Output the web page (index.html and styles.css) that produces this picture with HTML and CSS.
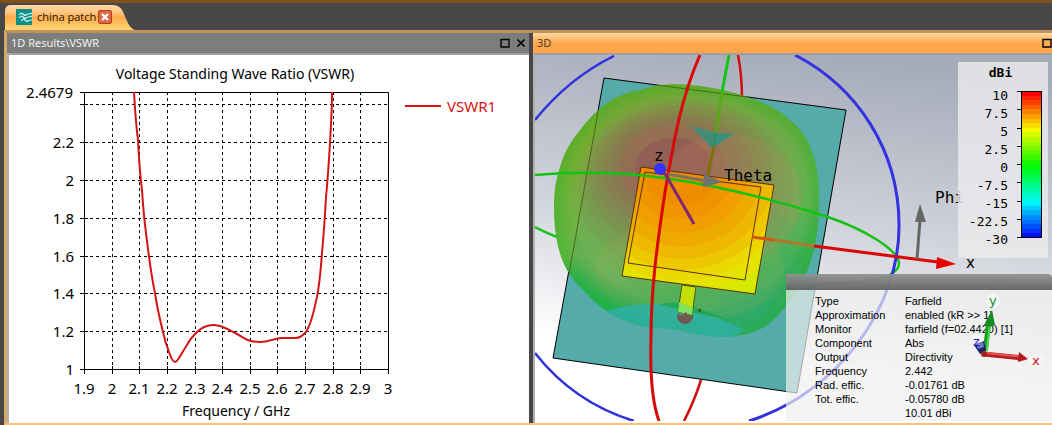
FILE: index.html
```html
<!DOCTYPE html>
<html lang="en">
<head>
    <meta charset="UTF-8">
    <meta name="viewport" content="width=device-width, initial-scale=1.0">
    <title>china patch</title>
    <link rel="stylesheet" href="styles.css">
</head>
<body>
    <div class="tabs">
        <div class="tab">
            <svg class="tab-shape" viewBox="0 0 130 26" preserveAspectRatio="none" aria-hidden="true">
                <defs>
                    <linearGradient id="tabFill" x1="0" y1="0" x2="0" y2="1">
                        <stop offset="0" stop-color="#ffd9a0"/>
                        <stop offset="0.3" stop-color="#ffc680"/>
                        <stop offset="0.5" stop-color="#ffac4e"/>
                        <stop offset="1" stop-color="#ffd873"/>
                    </linearGradient>
                </defs>
                <path d="M0 26V6Q0 0 6 0H108Q115 0 118 7L123 19Q126 25 130 26Z" fill="url(#tabFill)"/>
            </svg>
            <svg class="tab-icon" width="16" height="16" viewBox="0 0 16 16" aria-hidden="true">
                <rect width="16" height="16" fill="#0b9085"/>
                <g fill="none" stroke="#d8f4ef" stroke-width="1.2">
                    <path d="M3 6q2-3 4-1t3 1t3-1t3-1"/>
                    <path d="M3 9q2-3 4-1t3 1t3-1t3-1"/>
                    <path d="M5 12q2-3 4-1t3 1t4-1"/>
                </g>
            </svg>
            <a class="tab-name" href="#">china patch</a>
            <button class="tab-close" aria-label="Close tab">
                <svg width="8" height="8" viewBox="0 0 8 8"><path d="M1 1L7 7M7 1L1 7" stroke="#fff" stroke-width="2.4"/></svg>
            </button>
        </div>
    </div>

    <main class="workspace">
        <section class="panel">
            <header class="panel-bar">
                <h2>1D Results\VSWR</h2>
                <button aria-label="Maximize"><svg width="10" height="10" viewBox="0 0 10 10"><path d="M1 1.5H9V9H1Z" fill="none" stroke="#000" stroke-width="1.4"/></svg></button>
                <button aria-label="Close"><svg width="10" height="10" viewBox="0 0 10 10"><path d="M1.5 1.5L8.5 8.5M8.5 1.5L1.5 8.5" stroke="#000" stroke-width="1.7"/></svg></button>
            </header>
            <div class="panel-body">
                <svg class="chart" viewBox="9 55 520 368" role="img" aria-label="Voltage Standing Wave Ratio">
                    <text class="chart-title" x="235" y="79" text-anchor="middle">Voltage Standing Wave Ratio (VSWR)</text>
                    <path class="grid" d="M84 104.5H388M84 142.5H388M84 180.5H388M84 218.5H388M84 256.5H388M84 293.5H388M84 331.5H388"/>
                    <path class="grid" d="M112.5 92V369M139.5 92V369M167.5 92V369M195.5 92V369M222.5 92V369M250.5 92V369M277.5 92V369M305.5 92V369M333.5 92V369M360.5 92V369"/>
                    <path class="axis" d="M84.5 92.5H388.5V369.5H84.5Z"/>
                    <path class="axis" d="M80 92.5h8M80 104.5h8M80 142.5h8M80 180.5h8M80 218.5h8M80 256.5h8M80 293.5h8M80 331.5h8M80 369.5h8"/>
                    <path class="axis" d="M84.5 366v8M112.5 366v8M139.5 366v8M167.5 366v8M195.5 366v8M222.5 366v8M250.5 366v8M277.5 366v8M305.5 366v8M333.5 366v8M360.5 366v8M388.5 366v8"/>
                    <g class="chart-text" text-anchor="end">
                        <text x="73" y="98">2.4679</text>
                        <text x="74" y="148">2.2</text>
                        <text x="74" y="186">2</text>
                        <text x="74" y="224">1.8</text>
                        <text x="74" y="262">1.6</text>
                        <text x="74" y="299">1.4</text>
                        <text x="74" y="337">1.2</text>
                        <text x="74" y="375">1</text>
                    </g>
                    <g class="chart-text" text-anchor="middle">
                        <text x="84" y="394">1.9</text>
                        <text x="112" y="394">2</text>
                        <text x="139" y="394">2.1</text>
                        <text x="167" y="394">2.2</text>
                        <text x="195" y="394">2.3</text>
                        <text x="222" y="394">2.4</text>
                        <text x="250" y="394">2.5</text>
                        <text x="277" y="394">2.6</text>
                        <text x="305" y="394">2.7</text>
                        <text x="333" y="394">2.8</text>
                        <text x="360" y="394">2.9</text>
                        <text x="388" y="394">3</text>
                    </g>
                    <text class="chart-title" x="236" y="416" text-anchor="middle">Frequency / GHz</text>
                    <path class="curve" d="M134 92C135 110 136 125 138 140C139 160 140 175 142 190C143 205 144 218 146 233C149 257 151 275 155 293C157 307 160 320 163 332C165 341 167 347 169 352C171 358 173 362 175 362C178 362 182 352 187 345C189 341 192 337 195 334C201 327 207 325 214 325C222 325 229 330 237 334C243 337 247 342 260 342C270 342 274 338 282 338H296C301 338 303 335 306 332C312 323 314 310 317 297C320 282 321 265 322 253C324 232 325 215 326 197C328 177 329 160 330 143C331 125 332 110 332 92"/>
                    <path class="curve" d="M405 106H441"/>
                    <text class="chart-text legend-name" x="447" y="112">VSWR1</text>
                </svg>
            </div>
        </section>

        <section class="panel active">
            <header class="panel-bar">
                <h2>3D</h2>
                <button aria-label="Maximize"><svg width="10" height="10" viewBox="0 0 10 10"><path d="M1 1.5H9V9H1Z" fill="none" stroke="#000" stroke-width="1.4"/></svg></button>
            </header>
            <div class="panel-body">
                <svg class="scene" viewBox="535 55 517 366" role="img" aria-label="3D farfield pattern of the patch antenna">
                    <defs>
                        <linearGradient id="sky" gradientUnits="userSpaceOnUse" x1="820" y1="55" x2="780" y2="400">
                            <stop offset="0" stop-color="#a5abb9"/>
                            <stop offset="0.5" stop-color="#d2d4dc"/>
                            <stop offset="0.9" stop-color="#ffffff"/>
                        </linearGradient>
                        <linearGradient id="lobe" gradientUnits="userSpaceOnUse" x1="640" y1="84" x2="720" y2="337">
                            <stop offset="0" stop-color="#84aa28"/>
                            <stop offset="0.3" stop-color="#74b03c"/>
                            <stop offset="0.62" stop-color="#66b850"/>
                            <stop offset="0.8" stop-color="#34b454"/>
                            <stop offset="1" stop-color="#24ae70"/>
                        </linearGradient>
                        <radialGradient id="patch" gradientUnits="userSpaceOnUse" cx="682" cy="165" r="136">
                            <stop offset="0.3" stop-color="#f08c00"/>
                            <stop offset="0.3" stop-color="#f09400"/>
                            <stop offset="0.4" stop-color="#f09400"/>
                            <stop offset="0.4" stop-color="#f09e00"/>
                            <stop offset="0.5" stop-color="#f09e00"/>
                            <stop offset="0.5" stop-color="#efaa00"/>
                            <stop offset="0.6" stop-color="#efaa00"/>
                            <stop offset="0.6" stop-color="#efb800"/>
                            <stop offset="0.69" stop-color="#efb800"/>
                            <stop offset="0.69" stop-color="#edc800"/>
                            <stop offset="0.77" stop-color="#edc800"/>
                            <stop offset="0.77" stop-color="#ebd800"/>
                            <stop offset="0.85" stop-color="#ebd800"/>
                            <stop offset="0.85" stop-color="#e4e400"/>
                            <stop offset="0.94" stop-color="#e4e400"/>
                            <stop offset="0.94" stop-color="#d4e800"/>
                        </radialGradient>
                        <filter id="soft" x="-20%" y="-20%" width="140%" height="140%">
                            <feGaussianBlur stdDeviation="7"/>
                        </filter>
                        <path id="lobeEdge" d="M554 203C554 190 556 178 560 167C564 152 571 141 580 130C588 119 597 110 607 103C617 96 628 92 640 90C651 86 662 84 673 84C685 84 696 85 707 87C721 89 734 92 747 97C760 101 771 106 780 112C790 119 797 126 803 133C810 144 815 157 817 170C819 180 819 193 819 203C819 222 817 240 812 257C808 270 804 281 797 290C789 303 780 314 770 323C761 330 751 334 740 335C733 337 727 337 720 337C709 336 698 334 687 332C677 329 667 328 657 328C643 327 630 323 617 317C604 311 593 301 583 290C577 284 571 277 567 270C560 258 557 244 555 230C554 220 554 212 554 203Z"/>
                        <clipPath id="lobeClip"><use href="#lobeEdge"/></clipPath>
                    </defs>

                    <rect x="535" y="55" width="517" height="366" fill="url(#sky)"/>

                    <!-- rings behind the board -->
                    <g fill="none" stroke-width="2.5">
                        <path d="M738 55Q742 75 742 100M701 380Q694 402 684 421" stroke="#d40c0c"/>
                        <path d="M535 227Q552 236 575 243" stroke="#14c414"/>
                        <path d="M535 120Q569 78 614 56M535 353C560 385 592 408 634 421" stroke="#3232dc"/>
                    </g>

                    <path d="M604 78L846 110L797 393L553 358Z" fill="#55aaaa" stroke="#000"/>

                    <!-- main lobe -->
                    <g clip-path="url(#lobeClip)">
                        <use href="#lobeEdge" fill="url(#lobe)"/>
                        <path d="M604 78L569 274L640 340H800L846 110Z" fill="#60907a" opacity="0.16"/>
                        <g fill="#98605a" fill-opacity="0.1">
                            <ellipse cx="692" cy="203" rx="120" ry="108" fill="#90c070"/>
                            <ellipse cx="688" cy="192" rx="116" ry="96" fill="#8c8850"/>
                            <ellipse cx="686" cy="188" rx="108" ry="89"/>
                            <ellipse cx="684" cy="183" rx="101" ry="81"/>
                            <ellipse cx="682" cy="179" rx="93" ry="73" fill-opacity="0.15"/>
                            <ellipse cx="680" cy="176" rx="84" ry="66" fill-opacity="0.15"/>
                            <ellipse cx="679" cy="173" rx="75" ry="59" fill-opacity="0.2"/>
                            <ellipse cx="677" cy="170" rx="65" ry="51" fill-opacity="0.2"/>
                            <ellipse cx="673" cy="168" rx="53" ry="43" fill="#a85c58" fill-opacity="0.35"/>
                            <ellipse cx="674" cy="168" rx="39" ry="30" fill="#904858" fill-opacity="0.4"/>
                        </g>
                        <ellipse cx="728" cy="198" rx="74" ry="64" fill="#d68c60" opacity="0.14"/>
                        <ellipse cx="690" cy="270" rx="95" ry="52" fill="#d0b050" opacity="0.12"/>
                        <use href="#lobeEdge" fill="none" stroke="#28b41c" stroke-width="14" opacity="0.5" filter="url(#soft)"/>
                        <path d="M567 270C575 290 598 315 640 325" fill="none" stroke="#08b050" stroke-width="26" opacity="0.6" filter="url(#soft)"/>
                        <path d="M600 313Q625 303 658 304Q678 306 695 311Q720 318 745 330Q720 345 690 340Q640 340 600 313Z" fill="#2eb0aa" opacity="0.8"/>
                        <path d="M660 305Q676 298 700 309L730 320Q690 312 660 305Z" fill="#10a850" opacity="0.7"/>
                        <path d="M604 78L569 274M604 78L846 110" fill="none" stroke="#4c6418"/>
                    </g>

                    <!-- patch and feed -->
                    <path d="M641 167L774 185L755 294L622 276Z" fill="url(#patch)" stroke="#5c3000"/>
                    <path d="M645 172L761 187L745 280L628 263Z" fill="none" stroke="#5c3000"/>
                    <path d="M682 285L696 287L692 315L678 312Z" fill="#c4e008" stroke="#3d5a10"/>
                    <path d="M679 302L693 308L692 315L678 312Z" fill="#82e060"/>
                    <path d="M677 314L683 315L686 312L688 315H693A8 8 0 0 1 677 317Z" fill="#705a50"/>
                    <path d="M697 311l4-3v4z" fill="#4c5000"/>

                    <path d="M691 126L716 133L734 134L712 148Z" fill="#389080"/>
                    <path d="M691 126L716 133L712 148Z" fill="#438c75"/>

                    <!-- rings in front -->
                    <g fill="none" stroke-width="3">
                        <path d="M700 55C678 105 672 155 665 192C657 245 651 290 651 337C650 370 652 402 659 421" stroke="#d90808"/>
                        <path d="M535 175C590 170 635 174 665 178C725 187 785 203 828 217C866 230 898 250 899 263C899 280 862 283 817 284" stroke="#10c410" stroke-width="2.5"/>
                        <path d="M795 55C857 87 899 150 899 225C900 305 840 392 749 421" stroke="#3232e0"/>
                        <path d="M729 55L722 92" stroke="#14c418"/>
                        <path d="M722 92L716 133" stroke="#58a818"/>
                        <path d="M716 133L714 146" stroke="#308e68"/>
                        <path d="M714 146L707 178" stroke="#7d7208"/>
                        <path d="M752 237L774 240" stroke="#d25a10"/>
                        <path d="M774 240L814 246" stroke="#b07828"/>
                        <path d="M814 246L938 262" stroke="#dc0404"/>
                        <path d="M664 172L694 224" stroke="#7f286d"/>
                        <path d="M668 174L706 181" stroke="#807060"/>
                    </g>
                    <path d="M937 257L956 264L936 269Z" fill="#e60000"/>
                    <path d="M704 174L723 182L703 187Z" fill="#707070"/>
                    <circle cx="660" cy="169" r="6" fill="#3434ff"/>
                    <path d="M917 259L920 220" stroke="#666" stroke-width="3"/>
                    <path d="M920 204L915 222H926Z" fill="#666"/>

                    <text class="axis-name" x="655" y="161">z</text>
                    <text class="axis-name" x="966" y="268">x</text>
                    <text class="angle-name" x="724" y="181">Theta</text>
                    <text class="angle-name" x="935" y="203">Phi</text>
                </svg>

                <div class="ramp">
                    <h3>dBi</h3>
                    <ul class="ramp-values">
                        <li>10</li>
                        <li>7.5</li>
                        <li>5</li>
                        <li>2.5</li>
                        <li>0</li>
                        <li>-7.5</li>
                        <li>-15</li>
                        <li>-22.5</li>
                        <li>-30</li>
                    </ul>
                    <svg class="ramp-bar" id="rampBar" width="26" height="149" viewBox="0 0 26 149" aria-hidden="true"></svg>
                </div>

                <div class="info">
                    <div class="info-bar"></div>
                    <table>
                        <tr><th>Type</th><td>Farfield</td></tr>
                        <tr><th>Approximation</th><td>enabled (kR &gt;&gt; 1)</td></tr>
                        <tr><th>Monitor</th><td>farfield (f=02.4420) [1]</td></tr>
                        <tr><th>Component</th><td>Abs</td></tr>
                        <tr><th>Output</th><td>Directivity</td></tr>
                        <tr><th>Frequency</th><td>2.442</td></tr>
                        <tr><th>Rad. effic.</th><td>-0.01761 dB</td></tr>
                        <tr><th>Tot. effic.</th><td>-0.05780 dB</td></tr>
                        <tr><th></th><td>10.01 dBi</td></tr>
                    </table>
                    <svg class="triad" width="76" height="84" viewBox="968 287 76 84" aria-hidden="true">
                        <g fill="#f7f7f7" fill-opacity="0.8">
                            <circle cx="993" cy="301" r="7"/>
                            <circle cx="977" cy="341" r="7"/>
                            <circle cx="1036" cy="361" r="7"/>
                        </g>
                        <path d="M985 351L989 322" stroke="#1a9c24" stroke-width="5"/>
                        <path d="M987 351L990 322" stroke="#3fe04c" stroke-width="2"/>
                        <path d="M992 310L984 325Q989 328 995 325Z" fill="#168c20"/>
                        <path d="M984 354L1022 358" stroke="#b42020" stroke-width="5"/>
                        <path d="M986 353L1022 357" stroke="#f05050" stroke-width="2"/>
                        <path d="M1019 352L1028 359L1018 362Z" fill="#b01c1c"/>
                        <path d="M974 345L984 341L986 350L980 354Z" fill="#18246e"/>
                        <path d="M976 344L983 342L984 347L978 349Z" fill="#7078c0"/>
                        <circle cx="984" cy="354" r="3" fill="#a02020"/>
                        <text x="989" y="305" class="triad-y">y</text>
                        <text x="973" y="346" class="triad-z">z</text>
                        <text x="1032" y="365" class="triad-x">x</text>
                    </svg>
                </div>
            </div>
        </section>
    </main>

    <script>
        // colour bar: 32 steps from red to blue
        const steps = 32;
        const rampBar = document.getElementById('rampBar');
        let marks = '';
        for (let i = 0; i < steps; i++) {
            const hue = i / (steps - 1) * 236;
            const y = 1 + Math.round(i * 147 / steps);
            const next = 1 + Math.round((i + 1) * 147 / steps);
            marks += `<rect x="4" y="${y}" width="21" height="${next - y}" fill="hsl(${hue}, 100%, 49%)"/>`;
        }
        marks += '<rect x="4.5" y="1.5" width="20" height="146" fill="none" stroke="#000"/>';
        for (let i = 0; i < 9; i++) {
            const y = Math.round(i * 146 / 8) + 1.5;
            marks += `<path d="M0 ${y}H5" stroke="#000"/>`;
        }
        rampBar.innerHTML = marks;
    </script>
</body>
</html>
```

FILE: styles.css
```css
* {
    box-sizing: border-box;
}
body {
    margin: 0;
    min-height: 100vh;
    display: flex;
    flex-direction: column;
    background-color: #484646;
    border-top: 3px solid #80501c;
    font-family: "Noto Sans", "Open Sans", sans-serif;
    color: #000;
}
h2, h3, ul {
    margin: 0;
    padding: 0;
    font-weight: normal;
}
button {
    display: flex;
    padding: 0;
    border: none;
    background: none;
    cursor: pointer;
}
svg {
    display: block;
}

/* document tabs */
.tabs {
    display: flex;
    height: 27px;
    padding: 2px 0 0 5px;
}
.tab {
    position: relative;
    display: flex;
    align-items: center;
    width: 130px;
    padding: 0 0 1px 11px;
}
.tab-shape {
    position: absolute;
    inset: 0;
    width: 100%;
    height: 100%;
}
.tab-icon, .tab-name, .tab-close {
    position: relative;
}
.tab-name {
    margin: 0 2px 0 5px;
    font-family: "Open Sans", "Noto Sans", sans-serif;
    font-size: 11px;
    line-height: 16px;
    color: #1c1408;
    text-decoration: none;
    white-space: nowrap;
}
.tab-close {
    align-items: center;
    justify-content: center;
    width: 14px;
    height: 14px;
    border: 1px solid #b8401c;
    border-radius: 2px;
    background-color: #dd6848;
}

/* docked panels */
.workspace {
    flex: 1;
    display: grid;
    grid-template-columns: 522fr 519fr;
    gap: 4px;
    margin-left: 4px;
    border-left: 3px solid #d9a868;
    border-top: 3px solid #c0925c;
    border-bottom: 2px solid #ffc070;
}
.panel {
    display: flex;
    flex-direction: column;
    min-width: 0;
}
.panel-bar {
    display: flex;
    align-items: center;
    gap: 6px;
    height: 20px;
    padding: 0 3px 0 4px;
    background-color: #7d7d7d;
    color: #f0f0f0;
}
.panel-bar h2 {
    flex: 1;
    font-size: 11px;
    line-height: 20px;
}
.panel.active .panel-bar {
    padding-right: 0;
    background: linear-gradient(#ffd9a0, #ffa850 50%, #ffa54a);
    color: #4c3c28;
}
.panel-body {
    position: relative;
    flex: 1;
    border-top: 2px solid #a0a0a0;
    border-left: 2px solid #b0b0b0;
    background-color: #fff;
}

/* VSWR chart */
.chart, .scene {
    width: 100%;
    height: auto;
}
.chart-text {
    font-size: 15px;
}
.chart-title {
    font-size: 14px;
}
.legend-name {
    fill: #d41414;
}
.axis, .grid {
    fill: none;
    stroke: #000;
    stroke-width: 1px;
}
.grid {
    stroke-dasharray: 3 3;
}
.curve {
    fill: none;
    stroke: #d41414;
    stroke-width: 2px;
}

/* 3D view */
.axis-name {
    font-family: "DejaVu Sans", sans-serif;
    font-size: 15px;
}
.angle-name {
    font-family: "DejaVu Sans Mono", monospace;
    font-size: 16px;
}
.ramp {
    position: absolute;
    top: 7px;
    right: 4px;
    display: grid;
    grid-template-columns: 50px 26px;
    grid-template-rows: 24px auto;
    column-gap: 9px;
    width: 90px;
    height: 196px;
    background-color: rgba(236, 236, 238, 0.8);
    font-family: "DejaVu Sans Mono", monospace;
    font-size: 13px;
    line-height: 18px;
    font-weight: bold;
}
.ramp h3 {
    grid-column: span 2;
    padding-top: 2px;
    text-align: center;
    font-size: 13px;
    font-weight: bold;
}
.ramp-values {
    padding-top: 1px;
    list-style: none;
    text-align: right;
}
.ramp-bar {
    margin-top: 4px;
}
.info {
    position: absolute;
    right: 0;
    bottom: 2px;
    width: 266px;
    height: 147px;
    background-color: rgba(240, 240, 240, 0.7);
    font-family: "Liberation Sans", sans-serif;
    font-size: 11px;
}
.info-bar {
    height: 16px;
    background: linear-gradient(rgba(130, 130, 130, 0.8), rgba(90, 90, 90, 0.9));
    border-top-right-radius: 4px;
}
.info table {
    margin: 4px 0 0 29px;
    border-collapse: collapse;
}
.info th, .info td {
    height: 14px;
    padding: 0;
    line-height: 14px;
    font-weight: normal;
    text-align: left;
    white-space: nowrap;
}
.info th {
    width: 90px;
}
.triad {
    position: absolute;
    top: 13px;
    right: 8px;
    font-family: "DejaVu Sans", sans-serif;
    font-size: 13px;
}
.triad-x {
    fill: #c81414;
}
.triad-y {
    fill: #14961e;
}
.triad-z {
    fill: #2020c8;
}
```
